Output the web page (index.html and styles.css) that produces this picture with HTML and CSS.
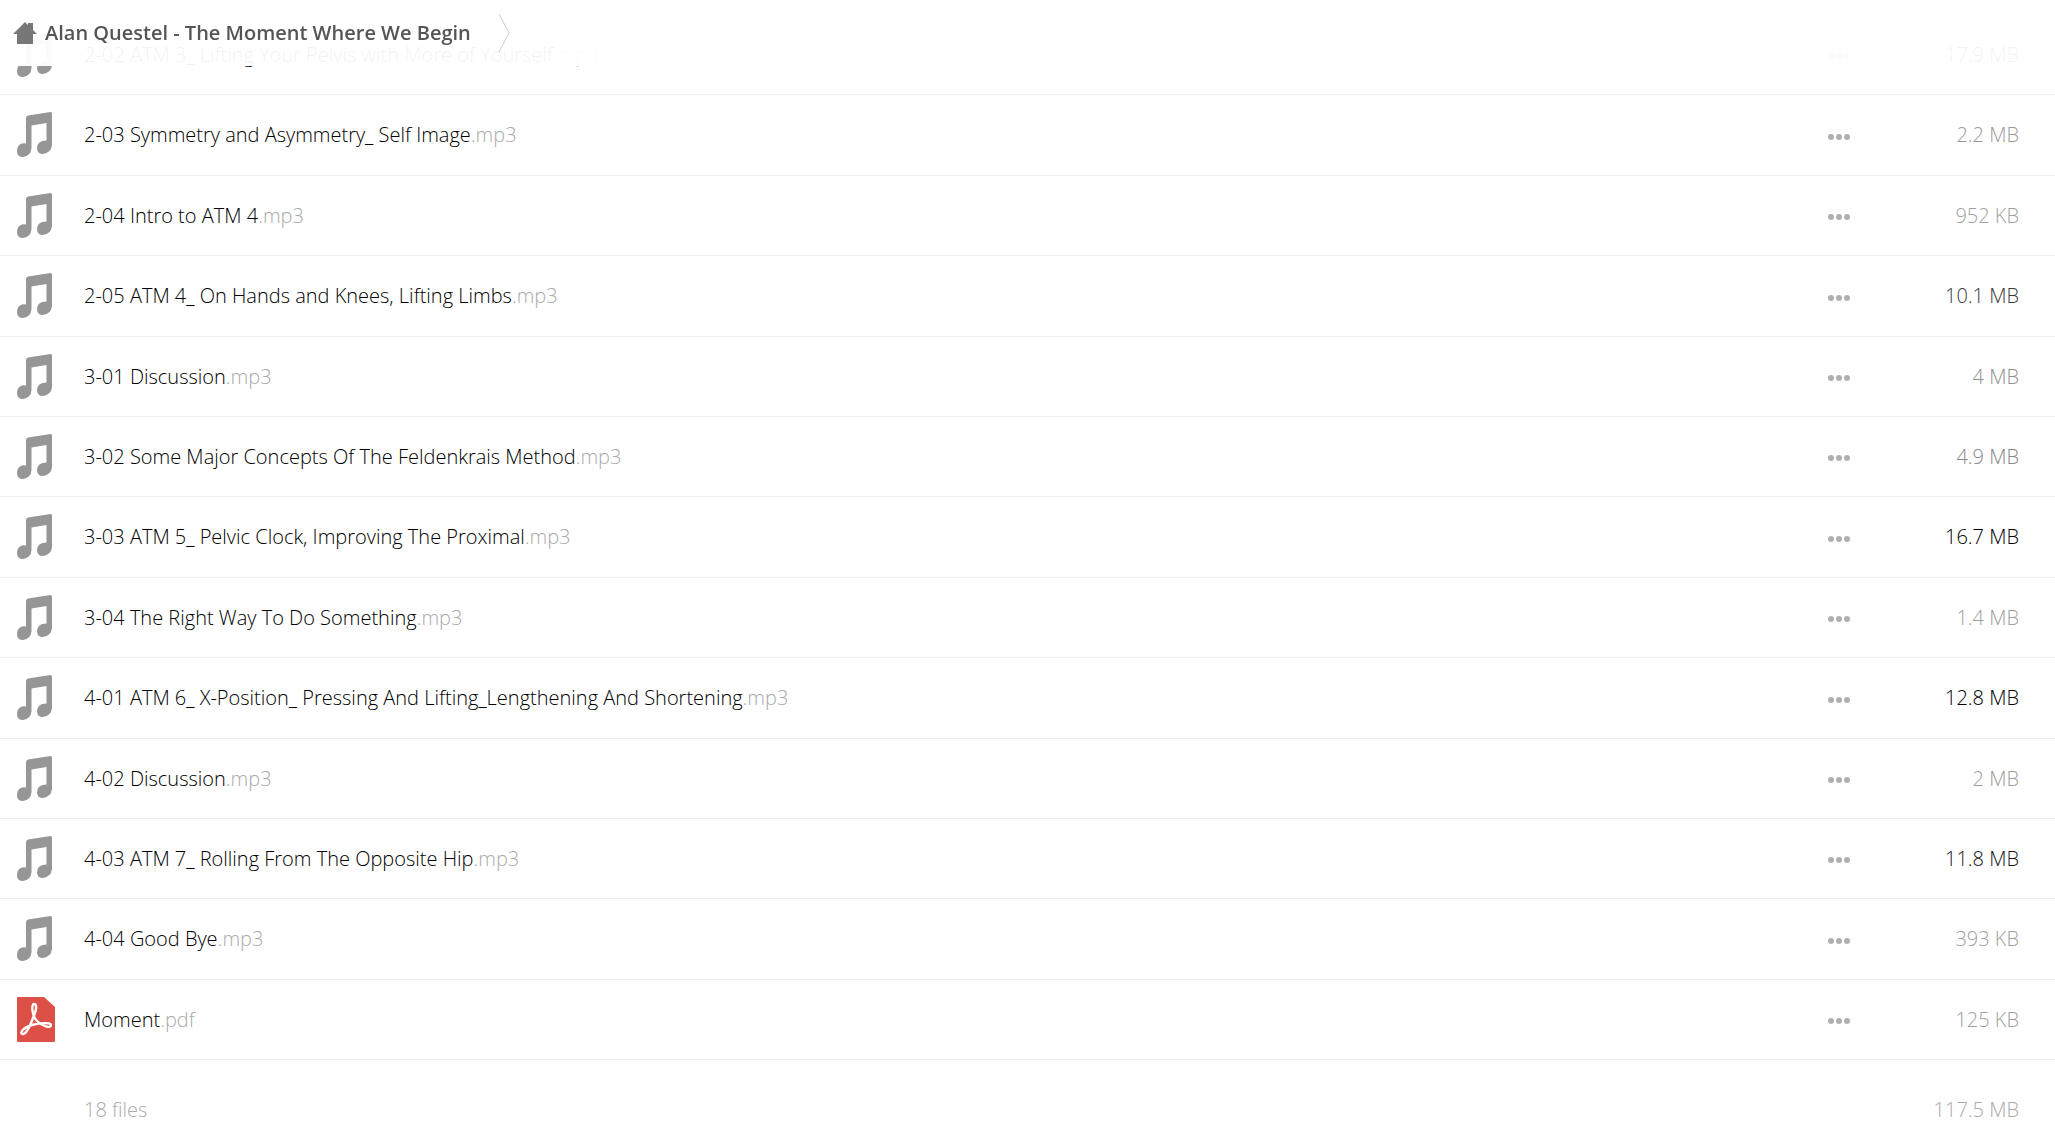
FILE: index.html
```html
<!DOCTYPE html>
<html lang="en">
<head>
<meta charset="utf-8">
<title>Files</title>
<link rel="stylesheet" href="styles.css">
</head>
<body>
<svg class="sprite" aria-hidden="true">
  <symbol id="note" viewBox="0 0 36 46"><path d="M11 3.500Q9 4 9 6V31.500Q7 31 5 31.500Q0 33 0 39Q0 45 6 45Q14 44 14.500 36V13.500L29.500 11V28.500Q20 28.500 20 36.500Q20.500 42 26 42Q34 41 35 33V1.500Q35 0 33.500 0Z"/></symbol>
  <symbol id="pdf" viewBox="0 0 38 45"><path fill="#dc5047" d="M1 0H27L38 10V44Q38 45 37 45H1Q0 45 0 44V1Q0 0 1 0Z"/><path fill="none" stroke="#fff" stroke-width="2.400" d="M17 7C20 7 20 12 16 21C13 29 9 37 6 37C2 37 5 31 15 28C22 26 34 25 34 28C34 32 25 29 20 24C15 19 14 7 17 7Z"/></symbol>
</svg>
<header class="controls">
  <nav class="breadcrumb" aria-label="Breadcrumb">
    <a href="#" class="home" aria-label="Home"><svg viewBox="0 0 24 22"><path d="M12 0L0 12H4V22H20V12H24L20 8V1H15V3Z"/></svg></a>
    <a href="#" class="crumb">Alan Questel - The Moment Where We Begin</a>
    <svg class="divider" viewBox="0 0 12 38"><path d="M1 0L11 19L1 38"/></svg>
  </nav>
</header>
<main class="content">
<table class="files">
<tbody id="list"></tbody>
<tfoot><tr><td class="icon"></td><td class="name">18 files</td><td></td><td class="size">117.5 MB</td></tr></tfoot>
</table>
</main>
<script src="files.js"></script>
</body>
</html>
```
FILE: styles.css
```css
body {
  margin: 0;
  background: #fff;
  color: #000;
  font: 300 20px/28px "Open Sans", sans-serif;
}
a { color: inherit; text-decoration: none; }
.sprite { position: absolute; width: 0; height: 0; }
.controls {
  position: fixed;
  z-index: 1;
  top: 0;
  left: 0;
  right: 0;
  height: 66px;
  background: rgba(255, 255, 255, .95);
}
.breadcrumb { display: flex; align-items: center; height: 65px; padding-left: 13px; }
.home svg { display: block; width: 24px; height: 22px; fill: #777; }
.crumb { margin: 0 27px 0 8px; font-weight: 600; color: #555; }
.divider { width: 12px; height: 38px; fill: none; stroke: #ccc; stroke-width: 1; }
.content { padding-top: 15px; }
.files { width: 100%; border-collapse: separate; border-spacing: 0; table-layout: fixed; }
.files td { box-sizing: border-box; height: 80px; padding: 0; border-bottom: 1px solid #eee; }
tbody tr:nth-child(5n + 2) td, tbody tr:nth-child(5n + 4) td { height: 81px; }
.files .icon { width: 84px; padding-left: 17px; }
.icon svg { display: block; width: 36px; height: 46px; fill: #969696; }
.icon .pdf { width: 38px; height: 45px; }
.ext { color: #aaa; }
.files .menu { width: 89px; padding-top: 3px; }
.menu button { display: flex; gap: 2px; padding: 4px 0; border: 0; background: none; }
.menu i { width: 6px; height: 6px; border-radius: 50%; background: #b0b0b0; }
.files .size { width: 138px; padding-right: 36px; text-align: right; }
.files tfoot td { height: 100px; border: 0; color: #aaa; }
```
FILE: files.js
```js
const files = [
  ["2-02 ATM 3_ Lifting Your Pelvis with More of Yourself", "mp3", "17.9 MB", 0],
  ["2-03 Symmetry and Asymmetry_ Self Image", "mp3", "2.2 MB", 155],
  ["2-04 Intro to ATM 4", "mp3", "952 KB", 159],
  ["2-05 ATM 4_ On Hands and Knees, Lifting Limbs", "mp3", "10.1 MB", 58],
  ["3-01 Discussion", "mp3", "4 MB", 144],
  ["3-02 Some Major Concepts Of The Feldenkrais Method", "mp3", "4.9 MB", 136],
  ["3-03 ATM 5_ Pelvic Clock, Improving The Proximal", "mp3", "16.7 MB", 0],
  ["3-04 The Right Way To Do Something", "mp3", "1.4 MB", 158],
  ["4-01 ATM 6_ X-Position_ Pressing And Lifting_Lengthening And Shortening", "mp3", "12.8 MB", 0],
  ["4-02 Discussion", "mp3", "2 MB", 156],
  ["4-03 ATM 7_ Rolling From The Opposite Hip", "mp3", "11.8 MB", 21],
  ["4-04 Good Bye", "mp3", "393 KB", 160],
  ["Moment", "pdf", "125 KB", 160]
];
// Larger files get a darker size label.
document.getElementById("list").innerHTML = files.map(([name, ext, size, shade]) => {
  const icon = ext === "pdf" ? "pdf" : "note";
  return `<tr><td class="icon"><svg class="${icon}"><use href="#${icon}"/></svg></td>
<td class="name"><a href="#">${name}<span class="ext">.${ext}</span></a></td>
<td class="menu"><button type="button" aria-label="Actions for ${name}"><i></i><i></i><i></i></button></td>
<td class="size" style="color:rgb(${shade},${shade},${shade})">${size}</td></tr>`;
}).join("");
```
